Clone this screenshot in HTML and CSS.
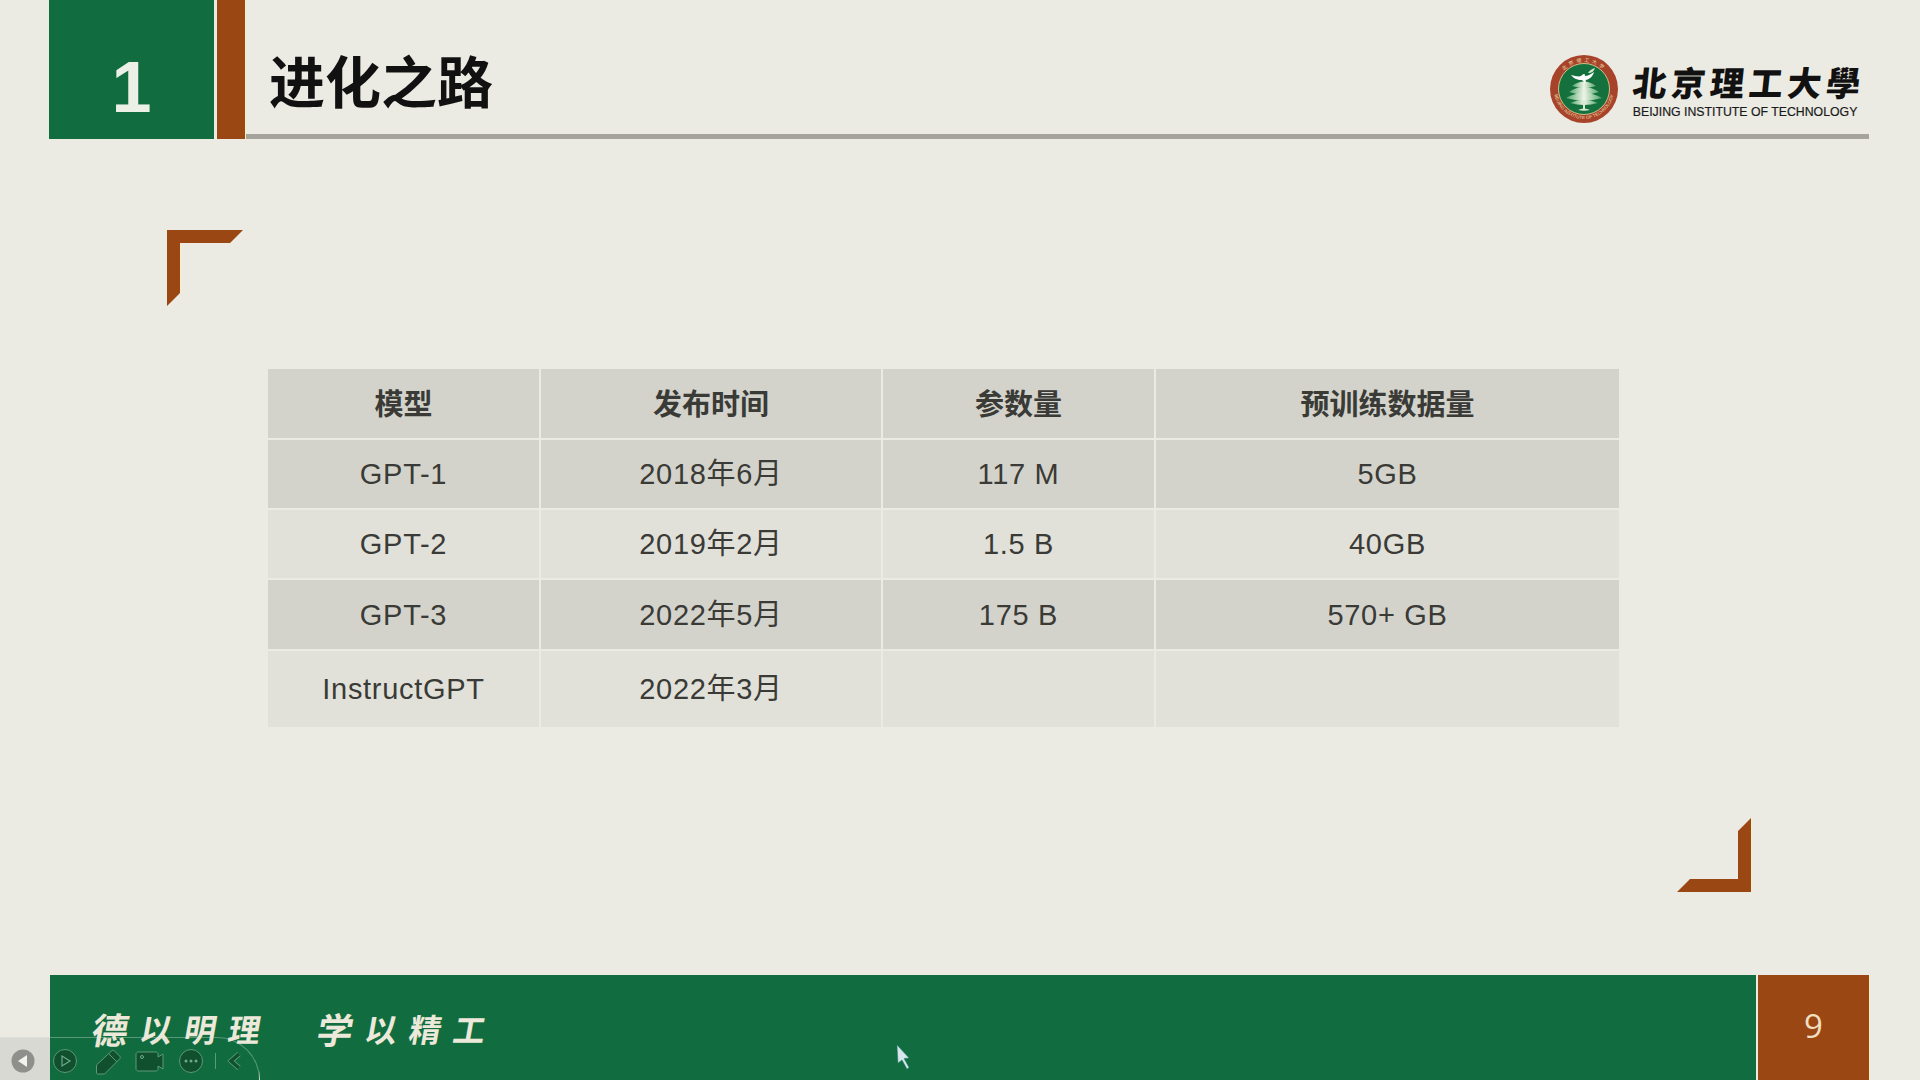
FILE: index.html
```html
<!DOCTYPE html>
<html lang="zh-CN">
<head>
    <meta charset="UTF-8">
    <title>进化之路</title>
    <link rel="stylesheet" href="styles.css">
</head>
<body>
    <div class="slide">
        <div class="header">
            <div class="section-num">1</div>
            <div class="section-bar"></div>
            <div class="title-row">
                <h1 class="title">进化之路</h1>
                <div class="logo">
                    <svg class="seal" viewBox="0 0 68 68" width="68" height="68">
                        <defs>
                            <path id="ringTop" d="M7 34a27 27 0 0 1 54 0"/>
                            <path id="ringBottom" d="M4 34a30 30 0 0 0 60 0"/>
                            <linearGradient id="treeFill" x1="0" y1="0" x2="1" y2="0">
                                <stop offset="0" stop-color="#4fa368"/>
                                <stop offset="0.5" stop-color="#eef5e6"/>
                                <stop offset="1" stop-color="#4fa368"/>
                            </linearGradient>
                        </defs>
                        <circle cx="34" cy="34" r="34" fill="#a8432b"/>
                        <circle cx="34" cy="34" r="25.5" fill="#14703c" stroke="#e8d9a0" stroke-width="0.8"/>
                        <text class="seal-cn"><textPath href="#ringTop" startOffset="50%" text-anchor="middle">北京理工大学</textPath></text>
                        <text class="seal-en"><textPath href="#ringBottom" startOffset="50%" text-anchor="middle">BEIJING INSTITUTE OF TECHNOLOGY</textPath></text>
                        <path d="M22 31q12-9 24 0q-12 4-24 0z" fill="url(#treeFill)"/>
                        <path d="M19 37q15-10 30 0q-15 5-30 0z" fill="url(#treeFill)"/>
                        <path d="M16 43q18-10 36 0q-18 5-36 0z" fill="url(#treeFill)"/>
                        <path d="M20 48q14-7 28 0q-14 4-28 0z" fill="url(#treeFill)"/>
                        <rect x="33" y="46" width="2" height="9" fill="#d8ead2"/>
                        <path d="M21 20c4 1 8 2 10 1 1-1 2-2 3-2s1 1 1 2c3 0 6-2 9-4-1 4-4 7-8 8l-1 3-3-3c-5 0-9-2-11-5z" fill="#fff"/>
                        <path d="M38 18c2-3 4-4 7-5-1 3-3 5-7 5z" fill="#cfe6c8"/>
                        <path d="M28 55c4-2 8-2 12 0-4 1-8 1-12 0z" fill="#d8ead2"/>
                    </svg>
                    <div class="logo-text">
                        <div class="logo-cn">北京理工大學</div>
                        <div class="logo-en">BEIJING INSTITUTE OF TECHNOLOGY</div>
                    </div>
                </div>
            </div>
        </div>

        <div class="content">
            <svg class="corner corner-tl" viewBox="0 0 76 76" width="76" height="76">
                <polygon points="0,0 76,0 63,13 13,13 13,63 0,76" fill="#9b4713"/>
                <line x1="13.5" y1="13" x2="13.5" y2="63" stroke="#f6f0c4" stroke-width="1"/>
            </svg>
            <table class="gpt-table">
                <colgroup>
                    <col class="col-model">
                    <col class="col-date">
                    <col class="col-params">
                    <col class="col-data">
                </colgroup>
                <tr class="row-dark row-head">
                    <th>模型</th><th>发布时间</th><th>参数量</th><th>预训练数据量</th>
                </tr>
                <tr class="row-dark">
                    <td>GPT-1</td><td>2018年6月</td><td>117 M</td><td>5GB</td>
                </tr>
                <tr class="row-light">
                    <td>GPT-2</td><td>2019年2月</td><td>1.5 B</td><td>40GB</td>
                </tr>
                <tr class="row-dark row-tall">
                    <td>GPT-3</td><td>2022年5月</td><td>175 B</td><td>570+ GB</td>
                </tr>
                <tr class="row-light row-last">
                    <td>InstructGPT</td><td>2022年3月</td><td></td><td></td>
                </tr>
            </table>
            <svg class="corner corner-br" viewBox="0 0 75 75" width="75" height="75">
                <polygon points="74,0 74,74 0,74 13,61 61,61 61,13" fill="#9b4713"/>
                <line x1="74.5" y1="0" x2="74.5" y2="74" stroke="#f6f0c4" stroke-width="1"/>
            </svg>
        </div>

        <div class="footer">
            <div class="motto">
                <div class="motto-group">
                    <span class="motto-big">德</span><span>以</span><span>明</span><span>理</span>
                </div>
                <div class="motto-group">
                    <span class="motto-big">学</span><span>以</span><span>精</span><span>工</span>
                </div>
            </div>
            <div class="page-num">9</div>
        </div>

        <!-- player toolbar on top of the slide -->
        <div class="toolbar">
            <svg viewBox="0 0 260 43" width="260" height="43">
                <circle cx="23" cy="24" r="11.5" fill="#8f8f8b"/>
                <path d="M27 18v12l-9-6z" fill="#f2f2ee"/>
                <circle cx="65" cy="24" r="11.5" fill="#10502f" stroke="#5c9a78"/>
                <path d="M62 19v10l8-5z" fill="none" stroke="#6fa98a" stroke-width="1.2"/>
                <path d="M96.500 36v-8l15-14c1-1 2-1 3 0l5 5c1 1 1 2 0 3l-15 15h-7c-1 0-1-1-1-1z" fill="#10502f" stroke="#5c9a78"/>
                <path d="M109 17l8 8" stroke="#5c9a78" fill="none"/>
                <path d="M136 17c0-1 1-2 2-2h18c1 0 2 1 2 2v3l5-3v15l-5-3v3c0 1-1 2-2 2h-18c-1 0-2-1-2-2z" fill="#10502f" stroke="#5c9a78"/>
                <circle cx="142" cy="20" r="1.500" fill="none" stroke="#6fa98a"/>
                <circle cx="191" cy="24" r="11.5" fill="#10502f" stroke="#5c9a78"/>
                <circle cx="186" cy="24" r="1.500" fill="#6fa98a"/>
                <circle cx="191" cy="24" r="1.500" fill="#6fa98a"/>
                <circle cx="196" cy="24" r="1.500" fill="#6fa98a"/>
                <line x1="215.500" y1="16" x2="215.500" y2="32" stroke="#5c9a78"/>
                <path d="M239 17l-8 7 8 7" fill="none" stroke="#5c9a78" stroke-width="5"/>
                <path d="M239 17l-8 7 8 7" fill="none" stroke="#10502f" stroke-width="3.500"/>
            </svg>
        </div>

        <svg class="cursor" viewBox="0 0 14 25" width="14" height="25">
            <path d="M1 0l12 13-5 .500 5 9-2 1.500-5-9-4 3z" fill="#d6e6ea" stroke="#2f7f7f" stroke-width="0.5"/>
        </svg>
    </div>
</body>
</html>
```

FILE: styles.css
```css
* {
    box-sizing: border-box;
}
body {
    margin: 0;
    padding: 0;
    background-color: #ecebe3;
    font-family: "Liberation Sans", "Noto Sans CJK SC", sans-serif;
}
.slide {
    position: relative;
    display: flex;
    flex-direction: column;
    width: 1920px;
    height: 1080px;
    overflow: hidden;
}

/* header */
.header {
    display: flex;
    height: 139px;
    padding: 0 51px 0 49px;
}
.section-num {
    width: 165px;
    padding-top: 48px;
    background-color: #116d40;
    color: #ecf0e6;
    font-size: 72px;
    font-weight: 700;
    line-height: 78px;
    text-align: center;
}
.section-bar {
    width: 29px;
    margin-left: 3px;
    background-color: #9b4713;
    border-right: 1px solid #f6f0c4;
}
.title-row {
    flex: 1;
    display: flex;
    justify-content: space-between;
    padding-left: 23px;
    border-bottom: 5px solid #a5a39b;
}
.title {
    margin: 0;
    padding-top: 41px;
    color: #111;
    font-size: 56px;
    font-weight: 700;
    line-height: 76px;
    font-family: "Noto Sans CJK SC", sans-serif;
}
.logo {
    display: flex;
    gap: 15px;
    padding: 55px 11px 0 0;
}
.seal {
    display: block;
}
.seal-cn {
    font-size: 5px;
    font-family: "Noto Sans CJK SC", sans-serif;
    letter-spacing: 2.500px;
    fill: #f0dfa8;
}
.seal-en {
    font-size: 4.5px;
    fill: #f0dfa8;
}
.logo-text {
    padding-top: 7px;
}
.logo-cn {
    margin-right: -7px;
    color: #111;
    font-family: "Noto Sans CJK TC", sans-serif;
    font-size: 34px;
    font-weight: 900;
    line-height: 40px;
    letter-spacing: 4.700px;
    white-space: nowrap;
    transform: skewX(-6deg);
}
.logo-en {
    margin-top: 3px;
    color: #1a1a1a;
    font-size: 12.300px;
    line-height: 14px;
    white-space: nowrap;
    -webkit-text-stroke: 0.2px #1a1a1a;
}

/* table */
.content {
    position: relative;
    flex: 1;
    padding: 230px 0 0 268px;
}
.corner {
    position: absolute;
}
.corner-tl {
    left: 167px;
    top: 91px;
}
.corner-br {
    left: 1677px;
    top: 679px;
}
.gpt-table {
    width: 1351px;
    table-layout: fixed;
    border-collapse: separate;
    border-spacing: 0;
    color: #3a3a36;
    font-size: 29px;
    line-height: 34px;
    letter-spacing: 0.700px;
}
.col-model {
    width: 273px;
}
.col-date {
    width: 342px;
}
.col-params {
    width: 273px;
}
.col-data {
    width: 463px;
}
.gpt-table th, .gpt-table td {
    height: 70px;
    padding: 0;
    text-align: center;
    border-right: 2px solid #ecebe3;
    border-bottom: 2px solid #ecebe3;
}
.gpt-table th:last-child, .gpt-table td:last-child {
    border-right: none;
}
.gpt-table th {
    height: 71px;
    padding-bottom: 4px;
    font-family: "Noto Sans CJK SC", sans-serif;
    font-weight: 700;
    letter-spacing: 0;
}
.row-dark th, .row-dark td {
    background-color: #d3d3cc;
}
.row-light td {
    background-color: #e1e1da;
}
.row-tall td {
    height: 71px;
}
.row-last td {
    height: 76px;
    border-bottom: none;
}

/* footer */
.footer {
    display: flex;
    height: 105px;
    margin: 0 50px 0 50px;
}
.motto {
    flex: 1;
    display: flex;
    gap: 57px;
    padding: 33px 0 0 40px;
    background-color: #116d40;
    color: #ede9da;
    font-family: "Noto Sans CJK SC", sans-serif;
    font-size: 32px;
    font-weight: 700;
    line-height: 40px;
}
.motto-group {
    display: flex;
    gap: 12px;
    transform: skewX(-10deg);
}
.motto-big {
    font-size: 36px;
}
.page-num {
    width: 112px;
    margin-left: 2px;
    padding-top: 31px;
    background-color: #9b4713;
    border-right: 1px solid #f6f0c4;
    color: #f0dfc0;
    font-family: "Open Sans", sans-serif;
    font-size: 33px;
    line-height: 40px;
    text-align: center;
}

/* overlays */
.toolbar {
    position: absolute;
    left: 0;
    bottom: 0;
    width: 260px;
    height: 43px;
    border: 1px solid rgba(220, 235, 220, 0.35);
    border-width: 1px 1px 0 0;
    border-radius: 0 43px 0 0;
    background: linear-gradient(to right, #d9d9d4 50px, rgba(0, 0, 0, 0.01) 50px);
}
.toolbar svg {
    display: block;
    margin-top: -1px;
}
.cursor {
    position: absolute;
    left: 896px;
    top: 1045px;
}
```
